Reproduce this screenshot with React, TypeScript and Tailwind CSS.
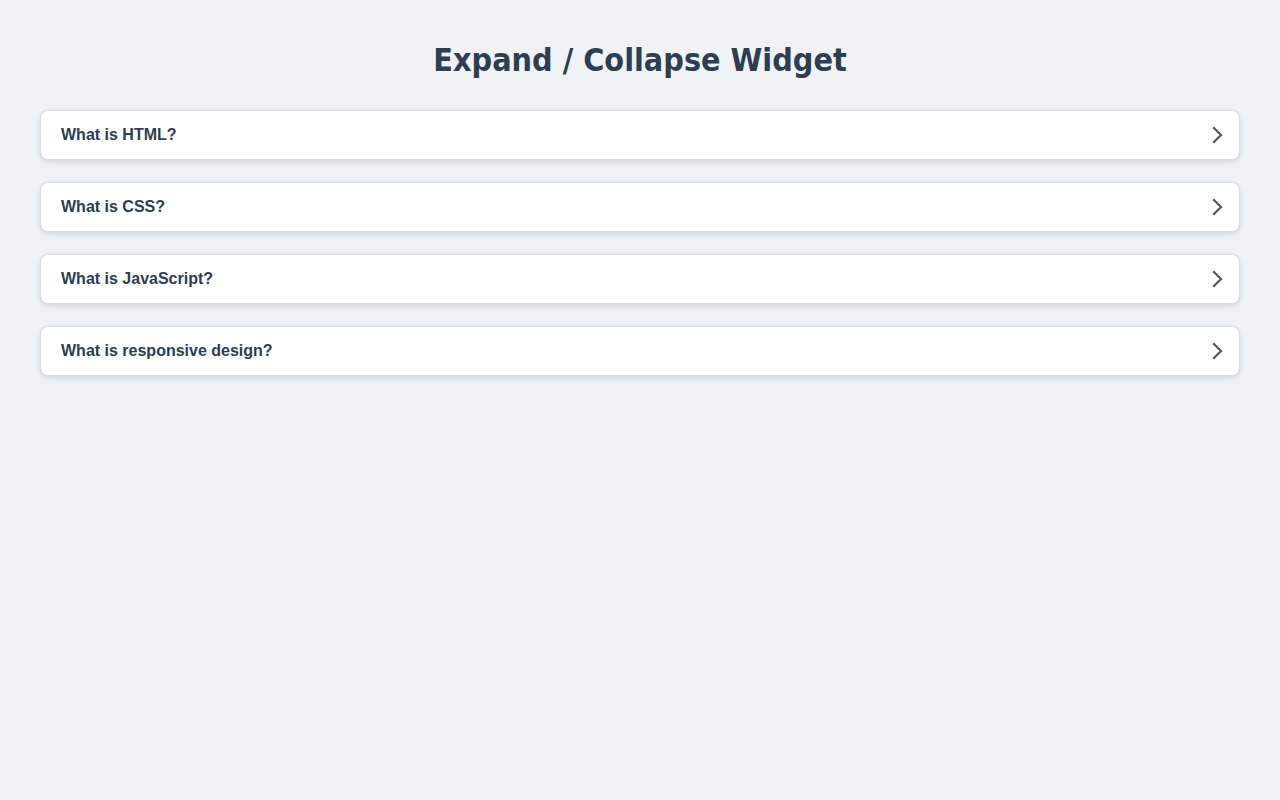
import { useState } from "react";

const items = [
  {
    q: "What is HTML?",
    a: "HTML (HyperText Markup Language) is the standard language used to structure content on the web.",
  },
  {
    q: "What is CSS?",
    a: "CSS (Cascading Style Sheets) describes how HTML elements are displayed on screen.",
  },
  {
    q: "What is JavaScript?",
    a: "JavaScript is a programming language that makes web pages interactive.",
  },
  {
    q: "What is responsive design?",
    a: "Responsive design makes pages adapt to different screen sizes and devices.",
  },
];

function Chevron({ open }: { open: boolean }) {
  return (
    <svg
      width="12"
      height="18"
      viewBox="0 0 12 18"
      className={open ? "rotate-90 transition-transform" : "transition-transform"}
    >
      <polyline
        points="3,2 10,9 3,16"
        fill="none"
        stroke="#555"
        strokeWidth="2.2"
        strokeLinecap="square"
      />
    </svg>
  );
}

export default function App() {
  const [open, setOpen] = useState<number | null>(null);

  return (
    <div className="min-h-screen bg-[#f0f2f5] px-10 pt-[41px]">
      <div className="mx-auto max-w-[1200px]">
        <h1 className="text-center text-[32px] font-bold leading-[38px] text-[#2c3e50] font-['DejaVu_Sans_Condensed','DejaVu_Sans',sans-serif] mb-[31px]">
          Expand / Collapse Widget
        </h1>
        <div className="flex flex-col gap-[22px]">
          {items.map((item, i) => (
            <div
              key={item.q}
              className="rounded-lg border border-[#d9dde2] bg-white shadow-[0_2px_6px_rgba(0,0,0,0.12)]"
            >
              <button
                onClick={() => setOpen(open === i ? null : i)}
                className="flex h-12 w-full items-center justify-between pl-5 pr-4 text-left"
              >
                <span className="text-base font-bold text-[#2c3e50] font-['Liberation_Sans',Arial,sans-serif]">
                  {item.q}
                </span>
                <Chevron open={open === i} />
              </button>
              {open === i && (
                <div className="border-t border-[#eee] px-5 py-4 text-[15px] text-[#555] font-['Liberation_Sans',Arial,sans-serif]">
                  {item.a}
                </div>
              )}
            </div>
          ))}
        </div>
      </div>
    </div>
  );
}
